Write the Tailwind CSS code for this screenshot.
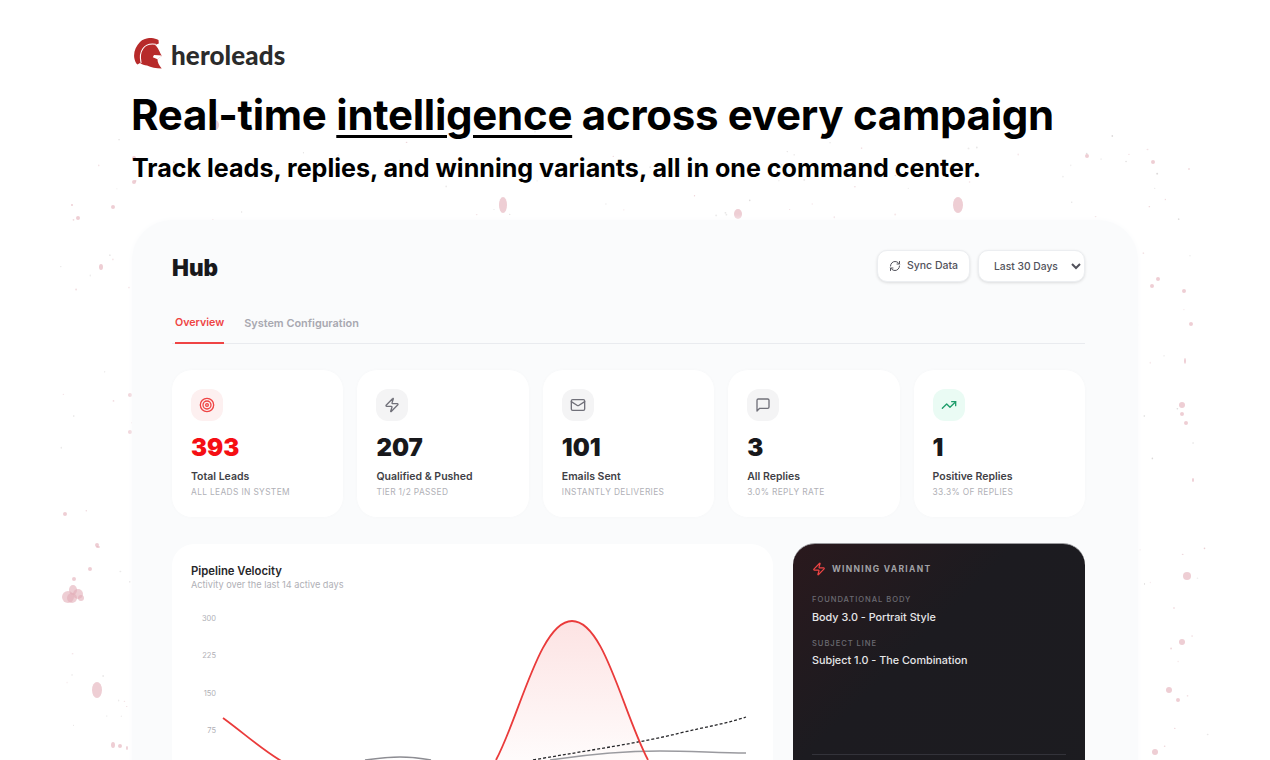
<!DOCTYPE html>
<html lang="en">
<head>
  <meta charset="UTF-8">
  <title>Heroleads Hub</title>
  <script src="https://cdn.jsdelivr.net/npm/@tailwindcss/browser@4"></script>
</head>
<body class="bg-white text-black font-['Inter',sans-serif]">
  <div class="relative w-[1270px] h-[760px] overflow-hidden">
    <!-- paint speckles, filled in by the script at the bottom -->
    <svg id="speckles" class="absolute inset-0" width="1270" height="760" viewBox="0 0 1270 760"></svg>

    <div class="relative pl-[132px] pt-[38px] flex flex-col">
      <div class="flex items-center h-[32px] gap-[8px] pl-[2px]">
        <svg width="29" height="32" viewBox="0 0 29 32">
          <path fill="#b72a2a" d="M24.500 2C19 -1 11 -1 6 4C1.500 8.500 -1 15 .5 21C1.200 24 2.200 25.500 3.500 26.500L6 25C8 26.500 10.500 27.500 13 27.500C17 29.500 22 30.300 27.700 30.500C24.800 27 23.400 24 23.500 21L28 17.800C26 15.500 25.800 13.500 24.500 11.500C23.500 9.500 22.500 8 21 7L24.800 5.600Z"/>
          <path fill="none" stroke="#fff" stroke-width="1.100" stroke-linecap="round" d="M21.500 6.300C16 5.500 11.500 7 9 10.500C6.500 14 5.800 19 7 24.500"/>
          <path fill="#fff" d="M28.500 17.500L20 17L18.800 19.300L23.500 21.200Z"/>
        </svg>
        <span class="font-['Lato',sans-serif] font-black text-[26px] leading-none text-[#2b2b2b] mt-[1px] tracking-[0.1px]">heroleads</span>
      </div>

      <h1 class="mt-[20px] text-[42px] leading-[50px] font-bold tracking-[-0.27px] whitespace-nowrap -ml-[1px]">Real-time <span class="underline decoration-[3px] underline-offset-[5px]">intelligence</span> across every campaign</h1>
      <p class="mt-[11px] text-[25.100px] leading-[34px] font-bold whitespace-nowrap">Track leads, replies, and winning variants, all in one command center.</p>

      <div class="mt-[35px] w-[1006px] h-[700px] rounded-[40px] bg-[#fafbfc] shadow-[0_0_6px_#fafbfc] pl-[40px] pr-[53px] pt-[30px]">
        <div class="flex items-center justify-between h-[32px]">
          <h2 class="text-[22.500px] font-black text-[#18181b] leading-none mt-[5px]">Hub</h2>
          <div class="flex gap-[8px]">
            <button class="flex items-center gap-[6px] w-[93px] h-[32px] justify-center rounded-[10px] bg-white border border-[#eceef1] shadow-[0_1px_3px_rgba(0,0,0,0.12)] text-[10.500px] font-medium text-[#52525b]">
              <svg width="12" height="12" viewBox="0 0 24 24" fill="none" stroke="#52525b" stroke-width="2" stroke-linecap="round" stroke-linejoin="round"><path d="M3 12a9 9 0 0 1 9-9 9.750 9.750 0 0 1 6.740 2.740L21 8"/><path d="M21 3v5h-5"/><path d="M21 12a9 9 0 0 1-9 9 9.750 9.750 0 0 1-6.740-2.740L3 16"/><path d="M8 16H3v5"/></svg>
              Sync Data
            </button>
            <select class="w-[107px] h-[32px] pl-[11px] rounded-[10px] bg-white border border-[#eceef1] shadow-[0_1px_3px_rgba(0,0,0,0.12)] text-[10.300px] font-medium text-[#52525b]">
              <option>Last 30 Days</option>
            </select>
          </div>
        </div>

        <div class="mt-[28px] flex gap-[20px] h-[34px] pl-[3px] border-b border-[#e9ebef] text-[10.700px] font-semibold">
          <span class="h-[34px] pt-[5px] border-b-2 border-[#ef4444] text-[#ef4444]">Overview</span>
          <span class="pt-[5px] text-[10.900px] text-[#a8a8b0]">System Configuration</span>
        </div>

        <div class="mt-[26px] grid grid-cols-5 gap-[14px]">
          <div class="h-[147px] rounded-[20px] bg-white p-[19px] shadow-[0_0_4px_rgba(0,0,0,0.02)]">
            <div class="w-[32px] h-[32px] rounded-[12px] bg-[#fdf0f0] flex items-center justify-center">
              <svg width="16" height="16" viewBox="0 0 24 24" fill="none" stroke="#ef4444" stroke-width="2"><circle cx="12" cy="12" r="10"/><circle cx="12" cy="12" r="6"/><circle cx="12" cy="12" r="2"/></svg>
            </div>
            <div class="mt-[13px] text-[24px] leading-[28px] font-black text-[#f50f14]">393</div>
            <div class="mt-[8px] text-[10.500px] leading-[14px] font-semibold text-[#3f3f46]">Total Leads</div>
            <div class="mt-[1px] text-[8.400px] leading-[14px] uppercase tracking-[0.35px] text-[#b0b0b6]">All leads in system</div>
          </div>
          <div class="h-[147px] rounded-[20px] bg-white p-[19px] shadow-[0_0_4px_rgba(0,0,0,0.02)]">
            <div class="w-[32px] h-[32px] rounded-[12px] bg-[#f4f4f5] flex items-center justify-center">
              <svg width="16" height="16" viewBox="0 0 24 24" fill="none" stroke="#71717a" stroke-width="2" stroke-linecap="round" stroke-linejoin="round"><path d="M4 14a1 1 0 0 1-.78-1.630l9.900-10.200a.5.5 0 0 1 .86.460l-1.920 6.020A1 1 0 0 0 13 10h7a1 1 0 0 1 .78 1.630l-9.900 10.200a.5.5 0 0 1-.86-.460l1.920-6.020A1 1 0 0 0 11 14z"/></svg>
            </div>
            <div class="mt-[13px] text-[24px] leading-[28px] font-black text-[#18181b]">207</div>
            <div class="mt-[8px] text-[10.500px] leading-[14px] font-semibold text-[#3f3f46]">Qualified &amp; Pushed</div>
            <div class="mt-[1px] text-[8.400px] leading-[14px] uppercase tracking-[0.35px] text-[#b0b0b6]">Tier 1/2 passed</div>
          </div>
          <div class="h-[147px] rounded-[20px] bg-white p-[19px] shadow-[0_0_4px_rgba(0,0,0,0.02)]">
            <div class="w-[32px] h-[32px] rounded-[12px] bg-[#f4f4f5] flex items-center justify-center">
              <svg width="16" height="16" viewBox="0 0 24 24" fill="none" stroke="#71717a" stroke-width="2" stroke-linecap="round" stroke-linejoin="round"><rect x="2" y="4" width="20" height="16" rx="2"/><path d="m22 7-8.970 5.700a1.940 1.940 0 0 1-2.060 0L2 7"/></svg>
            </div>
            <div class="mt-[13px] text-[24px] leading-[28px] font-black text-[#18181b]">101</div>
            <div class="mt-[8px] text-[10.500px] leading-[14px] font-semibold text-[#3f3f46]">Emails Sent</div>
            <div class="mt-[1px] text-[8.400px] leading-[14px] uppercase tracking-[0.35px] text-[#b0b0b6]">Instantly deliveries</div>
          </div>
          <div class="h-[147px] rounded-[20px] bg-white p-[19px] shadow-[0_0_4px_rgba(0,0,0,0.02)]">
            <div class="w-[32px] h-[32px] rounded-[12px] bg-[#f4f4f5] flex items-center justify-center">
              <svg width="16" height="16" viewBox="0 0 24 24" fill="none" stroke="#71717a" stroke-width="2" stroke-linecap="round" stroke-linejoin="round"><path d="M21 15a2 2 0 0 1-2 2H7l-4 4V5a2 2 0 0 1 2-2h14a2 2 0 0 1 2 2z"/></svg>
            </div>
            <div class="mt-[13px] text-[24px] leading-[28px] font-black text-[#18181b]">3</div>
            <div class="mt-[8px] text-[10.500px] leading-[14px] font-semibold text-[#3f3f46]">All Replies</div>
            <div class="mt-[1px] text-[8.400px] leading-[14px] uppercase tracking-[0.35px] text-[#b0b0b6]">3.0% reply rate</div>
          </div>
          <div class="h-[147px] rounded-[20px] bg-white p-[19px] shadow-[0_0_4px_rgba(0,0,0,0.02)]">
            <div class="w-[32px] h-[32px] rounded-[12px] bg-[#eafbf4] flex items-center justify-center">
              <svg width="16" height="16" viewBox="0 0 24 24" fill="none" stroke="#1f9d6b" stroke-width="2" stroke-linecap="round" stroke-linejoin="round"><polyline points="22 7 13.500 15.500 8.500 10.500 2 17"/><polyline points="16 7 22 7 22 13"/></svg>
            </div>
            <div class="mt-[13px] text-[24px] leading-[28px] font-black text-[#18181b]">1</div>
            <div class="mt-[8px] text-[10.500px] leading-[14px] font-semibold text-[#3f3f46]">Positive Replies</div>
            <div class="mt-[1px] text-[8.400px] leading-[14px] uppercase tracking-[0.35px] text-[#b0b0b6]">33.3% of replies</div>
          </div>
        </div>

        <div class="mt-[27px] flex gap-[20px] items-start">
          <div class="relative w-[601px] h-[300px] rounded-[22px] bg-white pl-[19px] pt-[20px]">
            <h3 class="text-[11.300px] leading-[14px] font-semibold text-[#27272a]">Pipeline Velocity</h3>
            <p class="text-[9.200px] leading-[14px] text-[#b0b0b6]">Activity over the last 14 active days</p>
            <svg class="absolute left-0 top-0" width="601" height="300" viewBox="172 544 601 300" fill="none">
              <defs>
                <linearGradient id="redFill" x1="0" y1="0" x2="0" y2="1">
                  <stop offset="0" stop-color="#ef4444" stop-opacity="0.15"/>
                  <stop offset="1" stop-color="#ef4444" stop-opacity="0.02"/>
                </linearGradient>
              </defs>
              <g font-family="Inter, sans-serif" font-size="7.500" fill="#b0b0b6" text-anchor="end">
                <text x="216" y="621">300</text>
                <text x="216" y="658">225</text>
                <text x="216" y="696">150</text>
                <text x="216" y="733">75</text>
              </g>
              <path d="M496 760C520 715 540 621 572 621C604 621 622 710 648 760Z" fill="url(#redFill)"/>
              <path d="M365 760C380 758 392 757 400 757C410 757 420 758 431 760" stroke="#8d8d93" stroke-width="1.600"/>
              <path d="M550 760C590 754 620 751 660 751C690 751 720 753 746 753" stroke="#9a9a9f" stroke-width="1.600"/>
              <path d="M533 760C590 750 640 743 680 733C705 727 725 724 746 717" stroke="#27272a" stroke-width="1.300" stroke-dasharray="3 2"/>
              <path d="M223 718C245 734 262 750 283 762" stroke="#ea3b3b" stroke-width="1.800"/>
              <path d="M496 760C520 715 540 621 572 621C604 621 622 710 648 760" stroke="#ea3b3b" stroke-width="1.800"/>
            </svg>
          </div>
          <div class="w-[292px] h-[300px] -mt-[1px] rounded-[22px] border-t border-[#9a9a9e] bg-[linear-gradient(135deg,#2a191d_0%,#1c1b20_38%,#1c1c20_100%)] px-[19px] pt-[18px]">
            <div class="flex items-center gap-[6px]">
              <svg width="14" height="14" viewBox="0 0 24 24" fill="none" stroke="#ef4444" stroke-width="2" stroke-linecap="round" stroke-linejoin="round"><path d="M4 14a1 1 0 0 1-.78-1.630l9.900-10.200a.5.5 0 0 1 .86.460l-1.920 6.020A1 1 0 0 0 13 10h7a1 1 0 0 1 .78 1.630l-9.900 10.200a.5.5 0 0 1-.86-.460l1.920-6.020A1 1 0 0 0 11 14z"/></svg>
              <span class="text-[8.500px] font-bold tracking-[1.300px] text-[#a1a1a6]">WINNING VARIANT</span>
            </div>
            <div class="mt-[18px] text-[7.600px] leading-[12px] font-medium tracking-[0.950px] text-[#6b6b72]">FOUNDATIONAL BODY</div>
            <div class="mt-[5px] text-[10.800px] leading-[14px] font-medium text-[#e6e6e8]">Body 3.0 - Portrait Style</div>
            <div class="mt-[13px] text-[7.600px] leading-[12px] font-medium tracking-[0.950px] text-[#6b6b72]">SUBJECT LINE</div>
            <div class="mt-[4px] text-[10.800px] leading-[14px] font-medium text-[#e6e6e8]">Subject 1.0 - The Combination</div>
            <div class="mt-[86px] border-t border-[#33333a]"></div>
          </div>
        </div>
      </div>
    </div>
  </div>

  <script>
    // blots read off the reference: x, y, rx, ry
    const blots = [
      [503,205,4,8],[738,214,4,5],[958,205,5,8],[215,125,4,5],[73,590,4,5],[68,597,6,6],[78,594,5,5],[81,598,3,3],[72,598,5,5],
      [97,690,5,8],[1187,576,4,4],[1153,162,2,2],[101,267,2,3],[1182,405,3,3],[1182,414,2,2],[1191,324,2,2],
      [1158,279,2,2],[1152,286,2,2],[1184,291,2,2],[1185,361,1,3],[1186,423,2,2],[113,207,2,2],[78,218,2,2],
      [134,158,2,2],[134,182,2,2],[97,545,2,2],[98,547,2,1],[90,569,2,2],[74,579,2,2],[1169,690,3,3],[1182,642,3,3],
      [1155,752,3,3],[113,745,2,3],[120,746,2,2],[127,748,1,2],[65,514,2,2],[1087,156,2,2],[130,395,2,2],[130,432,2,2],
      [1178,700,2,2],[1193,480,1,2],[72,205,1,1]
    ];
    const svg = document.getElementById('speckles');
    function addDot(x, y, rx, ry, fill, op) {
      const el = document.createElementNS('http://www.w3.org/2000/svg', 'ellipse');
      el.setAttribute('cx', x); el.setAttribute('cy', y);
      el.setAttribute('rx', rx); el.setAttribute('ry', ry);
      el.setAttribute('fill', fill); el.setAttribute('opacity', op);
      svg.appendChild(el);
    }
    blots.forEach(b => addDot(b[0], b[1], b[2], b[3], '#e2aeb8', 0.6));
    // fine grit around the dashboard, seeded so every render is the same
    let seed = 1337;
    function rnd() { seed = (seed * 16807) % 2147483647; return seed / 2147483647; }
    for (let i = 0; i < 460; i++) {
      const x = 60 + rnd() * 1150, y = 125 + rnd() * 635;
      addDot(x, y, 0.5 + rnd() * 0.5, 0.5 + rnd() * 0.5, rnd() > 0.5 ? '#dfb0b8' : '#c4c0c0', 0.3 + rnd() * 0.3);
    }
  </script>
</body>
</html>
